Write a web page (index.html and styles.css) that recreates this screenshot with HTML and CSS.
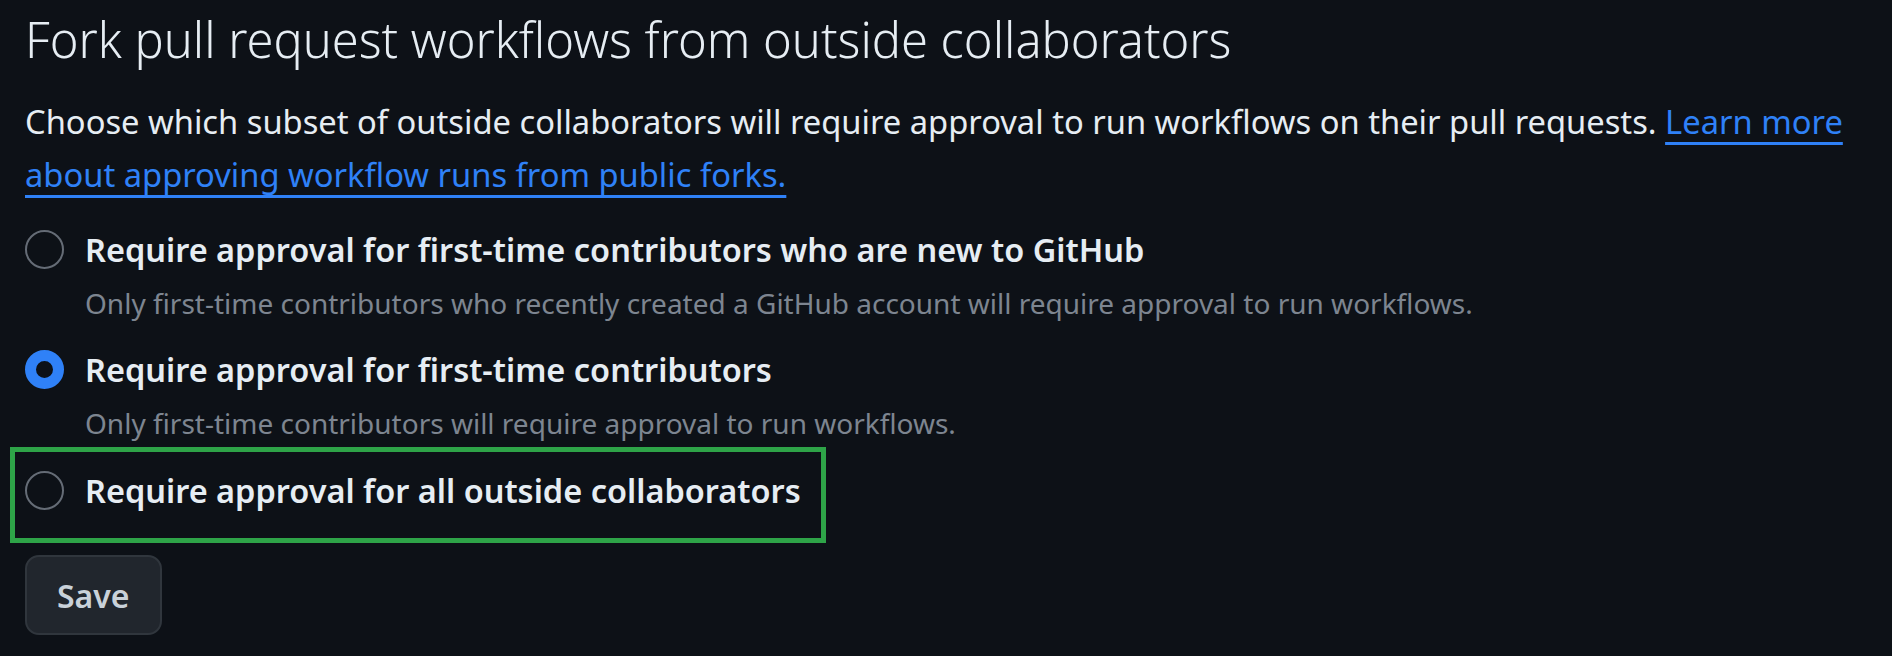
FILE: index.html
```html
<!DOCTYPE html>
<html lang="en">

<head>
    <meta charset="UTF-8">
    <meta name="viewport" content="width=device-width, initial-scale=1.0">
    <title>Actions settings - Fork pull request workflows</title>
    <link rel="stylesheet" href="styles.css">
</head>

<body>
    <div class="container">
        <h2 class="subhead">Fork pull request workflows from outside collaborators</h2>
        <p class="lead">Choose which subset of outside collaborators will require approval to run workflows on their
            pull requests. <a href="#">Learn more about approving workflow runs from public forks.</a></p>

        <form class="options">
            <div class="option">
                <span class="radio"></span>
                <div class="option-body">
                    <div class="option-label">Require approval for first-time contributors who are new to GitHub</div>
                    <div class="option-note">Only first-time contributors who recently created a GitHub account will
                        require approval to run workflows.</div>
                </div>
            </div>

            <div class="option">
                <span class="radio checked"></span>
                <div class="option-body">
                    <div class="option-label">Require approval for first-time contributors</div>
                    <div class="option-note">Only first-time contributors will require approval to run workflows.</div>
                </div>
            </div>

            <div class="marked">
                <div class="option">
                    <span class="radio"></span>
                    <div class="option-body">
                        <div class="option-label">Require approval for all outside collaborators</div>
                    </div>
                </div>
            </div>

            <button type="button" class="btn">Save</button>
        </form>
    </div>
</body>

</html>
```

FILE: styles.css
```css
body {
    margin: 0;
    background-color: #0d1117;
    color: #e6edf3;
    font-family: "Noto Sans", "Open Sans", sans-serif;
}

.container {
    padding: 4px 20px 0 25px;
}

.subhead {
    margin: 0;
    font-size: 48.8px;
    line-height: 70px;
    font-weight: 300;
}

.lead {
    margin: 21px 0 0;
    font-size: 32.7px;
    line-height: 53px;
}

.lead a {
    color: #2f81f7;
    text-decoration: underline;
    text-decoration-thickness: 3px;
    text-underline-offset: 8px;
}

.options {
    display: flex;
    flex-direction: column;
    align-items: flex-start;
    margin-top: 26px;
}

.option {
    display: flex;
    gap: 21px;
}

.option + .option {
    margin-top: 24px;
}

.radio {
    flex: none;
    box-sizing: border-box;
    width: 39px;
    height: 39px;
    margin-top: 3px;
    border: 2px solid #656c76;
    border-radius: 50%;
}

.radio.checked {
    border: 11px solid #2f81f7;
}

.option-label {
    font-size: 32.5px;
    line-height: 46px;
    font-weight: 600;
}

.option-note {
    margin-top: 10px;
    font-size: 28px;
    line-height: 40px;
    color: #7d8590;
}

.marked {
    margin: 4px 0 0 -15px;
    padding: 16px 20px 24px 10px;
    border: 5px solid #2ea448;
}

.btn {
    box-sizing: border-box;
    height: 80px;
    margin-top: 12px;
    padding: 0 30px;
    font-family: inherit;
    font-size: 32px;
    font-weight: 600;
    color: #c9d1d9;
    background: #21262d;
    border: 2px solid #30363d;
    border-radius: 14px;
}
```
